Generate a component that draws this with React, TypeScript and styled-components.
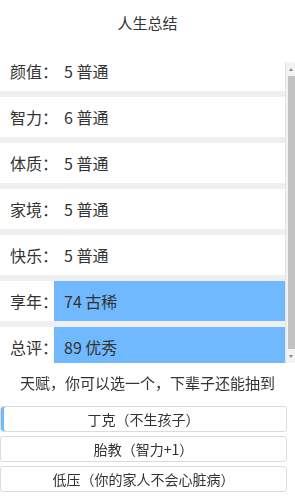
import React, { useLayoutEffect, useRef } from 'react';
import styled, { createGlobalStyle } from 'styled-components';

const GlobalStyle = createGlobalStyle`
  html, body {
    margin: 0;
    padding: 0;
    background: #fff;
  }
  body {
    font-family: "Noto Sans CJK SC", "Noto Sans", sans-serif;
    color: #333;
  }
`;

const Page = styled.div`
  width: 295px;
  height: 499px;
  display: flex;
  flex-direction: column;
  overflow: hidden;
`;

const Title = styled.div`
  height: 62px;
  line-height: 46px;
  text-align: center;
  font-size: 15px;
`;

const ListWrap = styled.div`
  display: flex;
  height: 301px;
`;

const List = styled.div`
  flex: 1;
  display: flex;
  flex-direction: column;
  gap: 6px;
  background: #efefef;
  overflow-y: scroll;
  scrollbar-width: none;
  &::-webkit-scrollbar {
    display: none;
  }
`;

const Row = styled.div`
  flex: 0 0 40px;
  display: flex;
`;

const Label = styled.div`
  width: 54px;
  flex: 0 0 54px;
  box-sizing: border-box;
  padding-left: 10px;
  display: flex;
  align-items: center;
  background: #fff;
  font-size: 16px;
  white-space: nowrap;
`;

const Value = styled.div<{ $hl?: boolean }>`
  flex: 1;
  padding-left: 10px;
  display: flex;
  align-items: center;
  background: ${p => (p.$hl ? '#70b9fe' : '#fff')};
  font-size: 16px;
  white-space: nowrap;
`;

const ScrollBar = styled.div`
  width: 10px;
  flex: 0 0 10px;
  display: flex;
  flex-direction: column;
  align-items: flex-end;
  background: #f3f3f3;
  border-left: 1px solid #e4e4e4;
  box-sizing: border-box;
`;

const Arrow = styled.div<{ $down?: boolean }>`
  height: 14px;
  width: 8px;
  display: flex;
  align-items: center;
  justify-content: center;
  &::after {
    content: '';
    border-left: 2px solid transparent;
    border-right: 2px solid transparent;
    ${p => (p.$down ? 'border-top: 3px solid #888;' : 'border-bottom: 3px solid #888;')}
  }
`;

const Thumb = styled.div`
  flex: 1;
  width: 7px;
  background: #c2c2c2;
`;

const Hint = styled.div`
  height: 43px;
  line-height: 40px;
  text-align: center;
  font-size: 15px;
`;

const Choices = styled.div`
  display: flex;
  flex-direction: column;
  gap: 4px;
`;

const Choice = styled.button<{ $active?: boolean }>`
  width: 287px;
  height: 26px;
  margin: 0;
  padding: 0;
  border: 1px solid #dcdcdc;
  border-radius: 3px;
  background: #fff;
  color: #333;
  font-family: inherit;
  font-size: 14px;
  line-height: 24px;
  box-shadow: ${p => (p.$active ? 'inset 3px 0 0 #70b9fe' : 'none')};
`;

const stats = [
  { label: '颜值：', value: '5 普通' },
  { label: '智力：', value: '6 普通' },
  { label: '体质：', value: '5 普通' },
  { label: '家境：', value: '5 普通' },
  { label: '快乐：', value: '5 普通' },
  { label: '享年：', value: '74 古稀', hl: true },
  { label: '总评：', value: '89 优秀', hl: true },
];

const talents = ['丁克（不生孩子）', '胎教（智力+1）', '低压（你的家人不会心脏病）'];

export default function App() {
  const listRef = useRef<HTMLDivElement>(null);

  useLayoutEffect(() => {
    if (listRef.current) listRef.current.scrollTop = 11;
  }, []);

  return (
    <Page>
      <GlobalStyle />
      <Title>人生总结</Title>
      <ListWrap>
        <List ref={listRef}>
          {stats.map(s => (
            <Row key={s.label}>
              <Label>{s.label}</Label>
              <Value $hl={s.hl}>{s.value}</Value>
            </Row>
          ))}
        </List>
        <ScrollBar>
          <Arrow />
          <Thumb />
          <Arrow $down />
        </ScrollBar>
      </ListWrap>
      <Hint>天赋，你可以选一个，下辈子还能抽到</Hint>
      <Choices>
        {talents.map((t, i) => (
          <Choice key={t} $active={i === 0}>
            {t}
          </Choice>
        ))}
      </Choices>
    </Page>
  );
}
